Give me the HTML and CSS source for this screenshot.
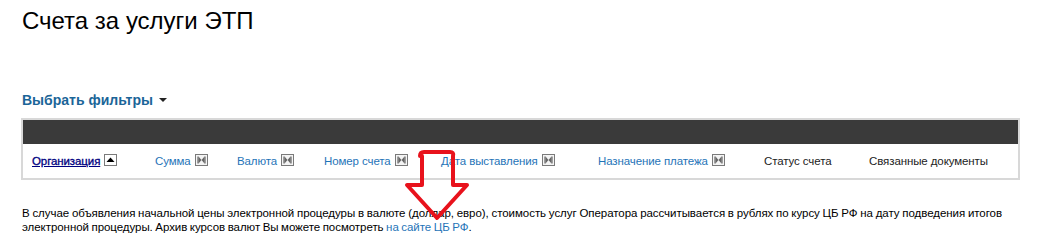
FILE: index.html
```html
<!DOCTYPE html>
<html lang="ru">
<head>
    <meta charset="UTF-8">
    <meta name="viewport" content="width=device-width, initial-scale=1.0">
    <title>Счета за услуги ЭТП</title>
    <link rel="stylesheet" href="styles.css">
</head>
<body>

<div class="page">
    <h1>Счета за услуги ЭТП</h1>

    <a class="filters" href="#">Выбрать фильтры <span class="caret"></span></a>

    <div class="grid-box">
        <table class="invoices">
            <colgroup>
                <col class="c-org">
                <col class="c-sum">
                <col class="c-cur">
                <col class="c-num">
                <col class="c-date">
                <col class="c-purpose">
                <col class="c-status">
                <col>
            </colgroup>
            <thead>
                <tr class="bar"><td colspan="8"></td></tr>
                <tr class="heads">
                    <th><a class="active" href="#">Организация</a> <svg class="sort" width="13" height="12" viewBox="0 0 13 12"><rect x="0.5" y="0.5" width="12" height="11" fill="#fff" stroke="#7a7a7a"/><polygon points="2.5,8 10.5,8 6.5,3.5" fill="#000"/></svg></th>
                    <th><a href="#">Сумма</a> <svg class="sort" width="13" height="12" viewBox="0 0 13 12"><rect x="0.5" y="0.5" width="12" height="11" fill="#f4f4f4" stroke="#7a7a7a"/><path d="M3 2.5v7M10 2.5v7" stroke="#666" stroke-width="1.2"/><polygon points="3.5,2.5 6.5,6 3.5,9.5" fill="#666"/><polygon points="9.5,2.5 6.5,6 9.5,9.5" fill="#666"/></svg></th>
                    <th><a href="#">Валюта</a> <svg class="sort" width="13" height="12" viewBox="0 0 13 12"><rect x="0.5" y="0.5" width="12" height="11" fill="#f4f4f4" stroke="#7a7a7a"/><path d="M3 2.5v7M10 2.5v7" stroke="#666" stroke-width="1.2"/><polygon points="3.5,2.5 6.5,6 3.5,9.5" fill="#666"/><polygon points="9.5,2.5 6.5,6 9.5,9.5" fill="#666"/></svg></th>
                    <th><a href="#">Номер счета</a> <svg class="sort" width="13" height="12" viewBox="0 0 13 12"><rect x="0.5" y="0.5" width="12" height="11" fill="#f4f4f4" stroke="#7a7a7a"/><path d="M3 2.5v7M10 2.5v7" stroke="#666" stroke-width="1.2"/><polygon points="3.5,2.5 6.5,6 3.5,9.5" fill="#666"/><polygon points="9.5,2.5 6.5,6 9.5,9.5" fill="#666"/></svg></th>
                    <th><a href="#">Дата выставления</a> <svg class="sort" width="13" height="12" viewBox="0 0 13 12"><rect x="0.5" y="0.5" width="12" height="11" fill="#f4f4f4" stroke="#7a7a7a"/><path d="M3 2.5v7M10 2.5v7" stroke="#666" stroke-width="1.2"/><polygon points="3.5,2.5 6.5,6 3.5,9.5" fill="#666"/><polygon points="9.5,2.5 6.5,6 9.5,9.5" fill="#666"/></svg></th>
                    <th><a href="#">Назначение платежа</a> <svg class="sort" width="13" height="12" viewBox="0 0 13 12"><rect x="0.5" y="0.5" width="12" height="11" fill="#f4f4f4" stroke="#7a7a7a"/><path d="M3 2.5v7M10 2.5v7" stroke="#666" stroke-width="1.2"/><polygon points="3.5,2.5 6.5,6 3.5,9.5" fill="#666"/><polygon points="9.5,2.5 6.5,6 9.5,9.5" fill="#666"/></svg></th>
                    <th>Статус счета</th>
                    <th>Связанные документы</th>
                </tr>
            </thead>
        </table>
    </div>

    <p class="note">В случае объявления начальной цены электронной процедуры в валюте (доллар, евро), стоимость услуг Оператора рассчитывается в рублях по курсу ЦБ РФ на дату подведения итогов электронной процедуры. Архив курсов валют Вы можете посмотреть <a href="#">на сайте ЦБ РФ</a>.</p>

    <svg class="pointer" width="80" height="80" viewBox="400 148 80 80">
        <path d="M420 156 Q420 152 424 152 L450 152 Q454 152 453 156 L453 185 L467 185 L437 218 L407 185 L422 185 L422 156" fill="none" stroke="#e8121c" stroke-width="4" stroke-linejoin="round" stroke-linecap="round"/>
    </svg>
</div>

</body>
</html>
```

FILE: styles.css
```css
body {
    font-family: "Liberation Sans", Arial, sans-serif;
    background-color: #fff;
    color: #000;
    margin: 0;
    padding: 0;
}
.page {
    position: relative;
    padding: 7px 0 0 0;
}
h1 {
    font-size: 24px;
    font-weight: normal;
    margin: 0 0 0 22px;
    line-height: 27.6px;
}
.filters {
    display: inline-block;
    margin: 57px 0 0 22px;
    font-size: 14px;
    font-weight: bold;
    line-height: 16px;
    color: #1b6598;
    text-decoration: none;
}
.caret {
    display: inline-block;
    width: 0;
    height: 0;
    margin-left: 2px;
    vertical-align: 3px;
    border-left: 4px solid transparent;
    border-right: 4px solid transparent;
    border-top: 4px solid #222;
}
.grid-box {
    margin: 9px 22px 0 21px;
    border: 2px solid #d8d8d8;
    background-color: #fff;
}
.invoices {
    width: 100%;
    border-collapse: collapse;
    table-layout: fixed;
    font-size: 11.5px;
    letter-spacing: -0.1px;
}
.c-org { width: 132px; }
.c-sum { width: 82px; }
.c-cur { width: 87px; }
.c-num { width: 117px; }
.c-date { width: 157px; }
.c-purpose { width: 166px; }
.c-status { width: 105px; }
.bar td {
    height: 24px;
    padding: 0;
    background-color: #3a3a3a;
}
.heads th {
    height: 34px;
    padding: 0;
    font-weight: normal;
    text-align: left;
    white-space: nowrap;
    color: #222;
}
.heads th:first-child {
    padding-left: 9px;
}
.heads a {
    color: #1f74b8;
    text-decoration: none;
}
.heads a.active {
    color: #000080;
    text-decoration: underline;
    -webkit-text-stroke: 0.3px #000080;
}
.sort {
    vertical-align: -1px;
    margin-left: 1px;
}
.note {
    margin: 26px 40px 0 22px;
    font-size: 11.5px;
    letter-spacing: -0.05px;
    word-spacing: -0.6px;
    line-height: 14px;
    text-align: justify;
}
.note a {
    color: #1f74b8;
    text-decoration: none;
}
.pointer {
    position: absolute;
    left: 400px;
    top: 148px;
}
```
